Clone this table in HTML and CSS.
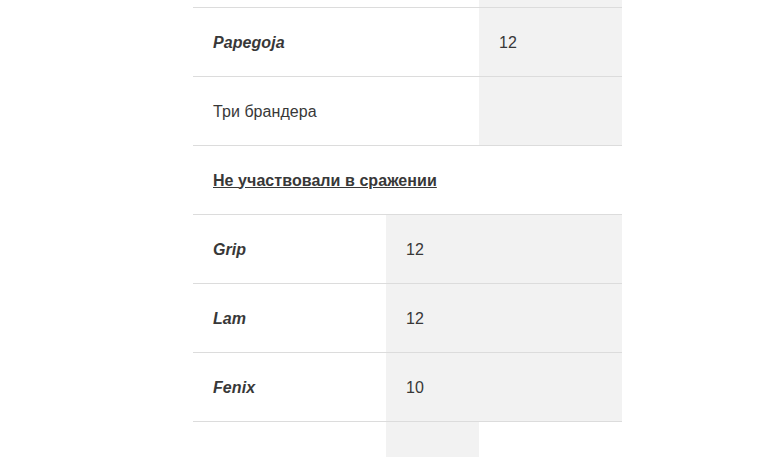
FILE: index.html
```html
<!DOCTYPE html>
<html lang="ru">
<head>
<meta charset="utf-8">
<title>Корабли</title>
<link rel="stylesheet" href="styles.css">
</head>
<body>
<div class="wrap">
  <div class="grid top">
    <div class="cell stub"></div>
    <div class="cell stub shade"></div>
    <div class="cell"><b><i>Papegoja</i></b></div>
    <div class="cell shade">12</div>
    <div class="cell">Три брандера</div>
    <div class="cell shade"></div>
  </div>
  <div class="cell heading"><a href="#">Не участвовали в сражении</a></div>
  <div class="grid bottom">
    <div class="cell"><b><i>Grip</i></b></div>
    <div class="cell shade span2">12</div>
    <div class="cell"><b><i>Lam</i></b></div>
    <div class="cell shade span2">12</div>
    <div class="cell"><b><i>Fenix</i></b></div>
    <div class="cell shade span2">10</div>
    <div class="cell last"></div>
    <div class="cell last shade"></div>
    <div class="cell last"></div>
  </div>
</div>
</body>
</html>
```
FILE: styles.css
```css
html, body {
  margin: 0;
  padding: 0;
  background: #fff;
}
body {
  font-family: "Liberation Sans", Arial, sans-serif;
  font-size: 16px;
  letter-spacing: 0.06px;
  color: #383838;
  overflow: hidden;
  height: 457px;
}
.wrap {
  width: 429px;
  margin-left: 193px;
}
.grid {
  display: grid;
}
.top {
  grid-template-columns: 286px 143px;
}
.bottom {
  grid-template-columns: 193px 93px 143px;
}
.cell {
  height: 67px;
  padding-top: 1px;
  border-bottom: 1px solid #dcdcdc;
  display: flex;
  align-items: center;
  padding-left: 20px;
  min-width: 0;
}
.stub {
  height: 7px;
  padding-top: 0;
}
.shade {
  background: #f2f2f2;
}
.span2 {
  grid-column: span 2;
}
.heading {
  font-weight: bold;
}
.heading a {
  color: #383838;
  text-decoration: underline;
}
.last {
  border-bottom: none;
  height: 34px;
}
```
